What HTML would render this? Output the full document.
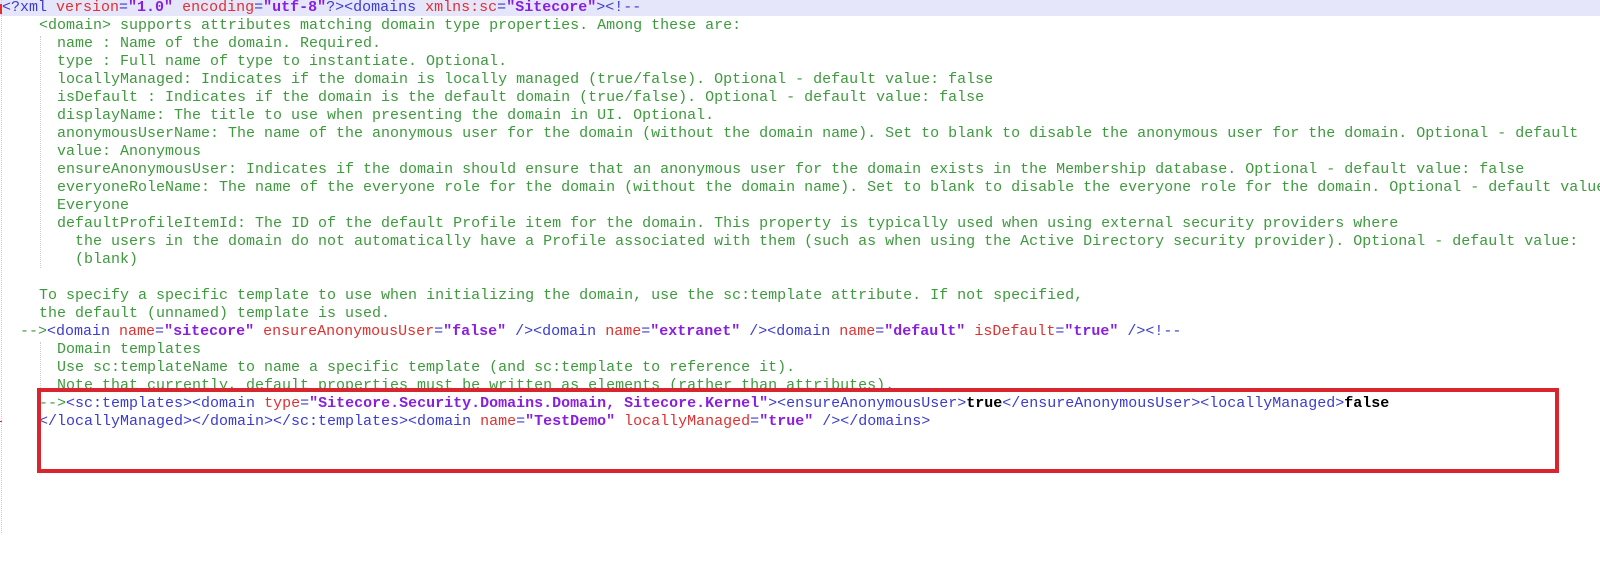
<!DOCTYPE html>
<html><head><meta charset="utf-8"><style>
html,body{margin:0;padding:0;background:#fff;width:1600px;height:584px;overflow:hidden;position:relative}
.l{position:absolute;white-space:pre;font-family:"Liberation Mono","Courier New",monospace;font-size:15px;line-height:18px;height:18px;color:#3d9a3d}
.t{color:#3b3bd0}.a{color:#e03030}.v{color:#8a1ee0;font-weight:bold}.k{color:#000;font-weight:bold}.c{color:#3d9a3d}
#hl{position:absolute;left:0;top:0;width:1600px;height:16px;background:#e6e6fb}
#box{position:absolute;left:37px;top:388px;width:1514px;height:77px;border:4px solid #d9262e}
.g{position:absolute;border-left:1px dotted #ccc}
</style></head><body>
<div id="hl"></div>
<div class="g" style="left:1px;top:0;height:533px"></div>
<div class="g" style="left:40px;top:36px;height:232px"></div>
<div class="g" style="left:40px;top:342px;height:46px"></div>
<div style="position:absolute;left:0;top:4px;width:2px;height:10px;background:#e03030"></div>
<div style="position:absolute;left:0;top:421px;width:2px;height:1px;background:#e03030"></div>
<div class="l" style="left:2px;top:-1px"><span class="t">&lt;?xml </span><span class="a">version</span><span class="t">=</span><span class="v">"1.0"</span><span class="t"> </span><span class="a">encoding</span><span class="t">=</span><span class="v">"utf-8"</span><span class="t">?&gt;&lt;domains </span><span class="a">xmlns:sc</span><span class="t">=</span><span class="v">"Sitecore"</span><span class="t">&gt;&lt;!--</span></div>
<div class="l" style="left:39px;top:17px">&lt;domain&gt; supports attributes matching domain type properties. Among these are:</div>
<div class="l" style="left:57px;top:35px">name : Name of the domain. Required.</div>
<div class="l" style="left:57px;top:53px">type : Full name of type to instantiate. Optional.</div>
<div class="l" style="left:57px;top:71px">locallyManaged: Indicates if the domain is locally managed (true/false). Optional - default value: false</div>
<div class="l" style="left:57px;top:89px">isDefault : Indicates if the domain is the default domain (true/false). Optional - default value: false</div>
<div class="l" style="left:57px;top:107px">displayName: The title to use when presenting the domain in UI. Optional.</div>
<div class="l" style="left:57px;top:125px">anonymousUserName: The name of the anonymous user for the domain (without the domain name). Set to blank to disable the anonymous user for the domain. Optional - default</div>
<div class="l" style="left:57px;top:143px">value: Anonymous</div>
<div class="l" style="left:57px;top:161px">ensureAnonymousUser: Indicates if the domain should ensure that an anonymous user for the domain exists in the Membership database. Optional - default value: false</div>
<div class="l" style="left:57px;top:179px">everyoneRoleName: The name of the everyone role for the domain (without the domain name). Set to blank to disable the everyone role for the domain. Optional - default value:</div>
<div class="l" style="left:57px;top:197px">Everyone</div>
<div class="l" style="left:57px;top:215px">defaultProfileItemId: The ID of the default Profile item for the domain. This property is typically used when using external security providers where</div>
<div class="l" style="left:75px;top:233px">the users in the domain do not automatically have a Profile associated with them (such as when using the Active Directory security provider). Optional - default value:</div>
<div class="l" style="left:75px;top:251px">(blank)</div>
<div class="l" style="left:39px;top:287px">To specify a specific template to use when initializing the domain, use the sc:template attribute. If not specified,</div>
<div class="l" style="left:39px;top:305px">the default (unnamed) template is used.</div>
<div class="l" style="left:20px;top:323px"><span class="c">--&gt;</span><span class="t">&lt;domain </span><span class="a">name</span><span class="t">=</span><span class="v">"sitecore"</span><span class="t"> </span><span class="a">ensureAnonymousUser</span><span class="t">=</span><span class="v">"false"</span><span class="t"> /&gt;&lt;domain </span><span class="a">name</span><span class="t">=</span><span class="v">"extranet"</span><span class="t"> /&gt;&lt;domain </span><span class="a">name</span><span class="t">=</span><span class="v">"default"</span><span class="t"> </span><span class="a">isDefault</span><span class="t">=</span><span class="v">"true"</span><span class="t"> /&gt;&lt;!--</span></div>
<div class="l" style="left:57px;top:341px">Domain templates</div>
<div class="l" style="left:57px;top:359px">Use sc:templateName to name a specific template (and sc:template to reference it).</div>
<div class="l" style="left:57px;top:377px">Note that currently, default properties must be written as elements (rather than attributes).</div>
<div class="l" style="left:39px;top:395px"><span class="c">--&gt;</span><span class="t">&lt;sc:templates&gt;&lt;domain </span><span class="a">type</span><span class="t">=</span><span class="v">"Sitecore.Security.Domains.Domain, Sitecore.Kernel"</span><span class="t">&gt;&lt;ensureAnonymousUser&gt;</span><span class="k">true</span><span class="t">&lt;/ensureAnonymousUser&gt;&lt;locallyManaged&gt;</span><span class="k">false</span></div>
<div class="l" style="left:39px;top:413px"><span class="t">&lt;/locallyManaged&gt;&lt;/domain&gt;&lt;/sc:templates&gt;&lt;domain </span><span class="a">name</span><span class="t">=</span><span class="v">"TestDemo"</span><span class="t"> </span><span class="a">locallyManaged</span><span class="t">=</span><span class="v">"true"</span><span class="t"> /&gt;&lt;/domains&gt;</span></div>
<div id="box"></div>
</body></html>
